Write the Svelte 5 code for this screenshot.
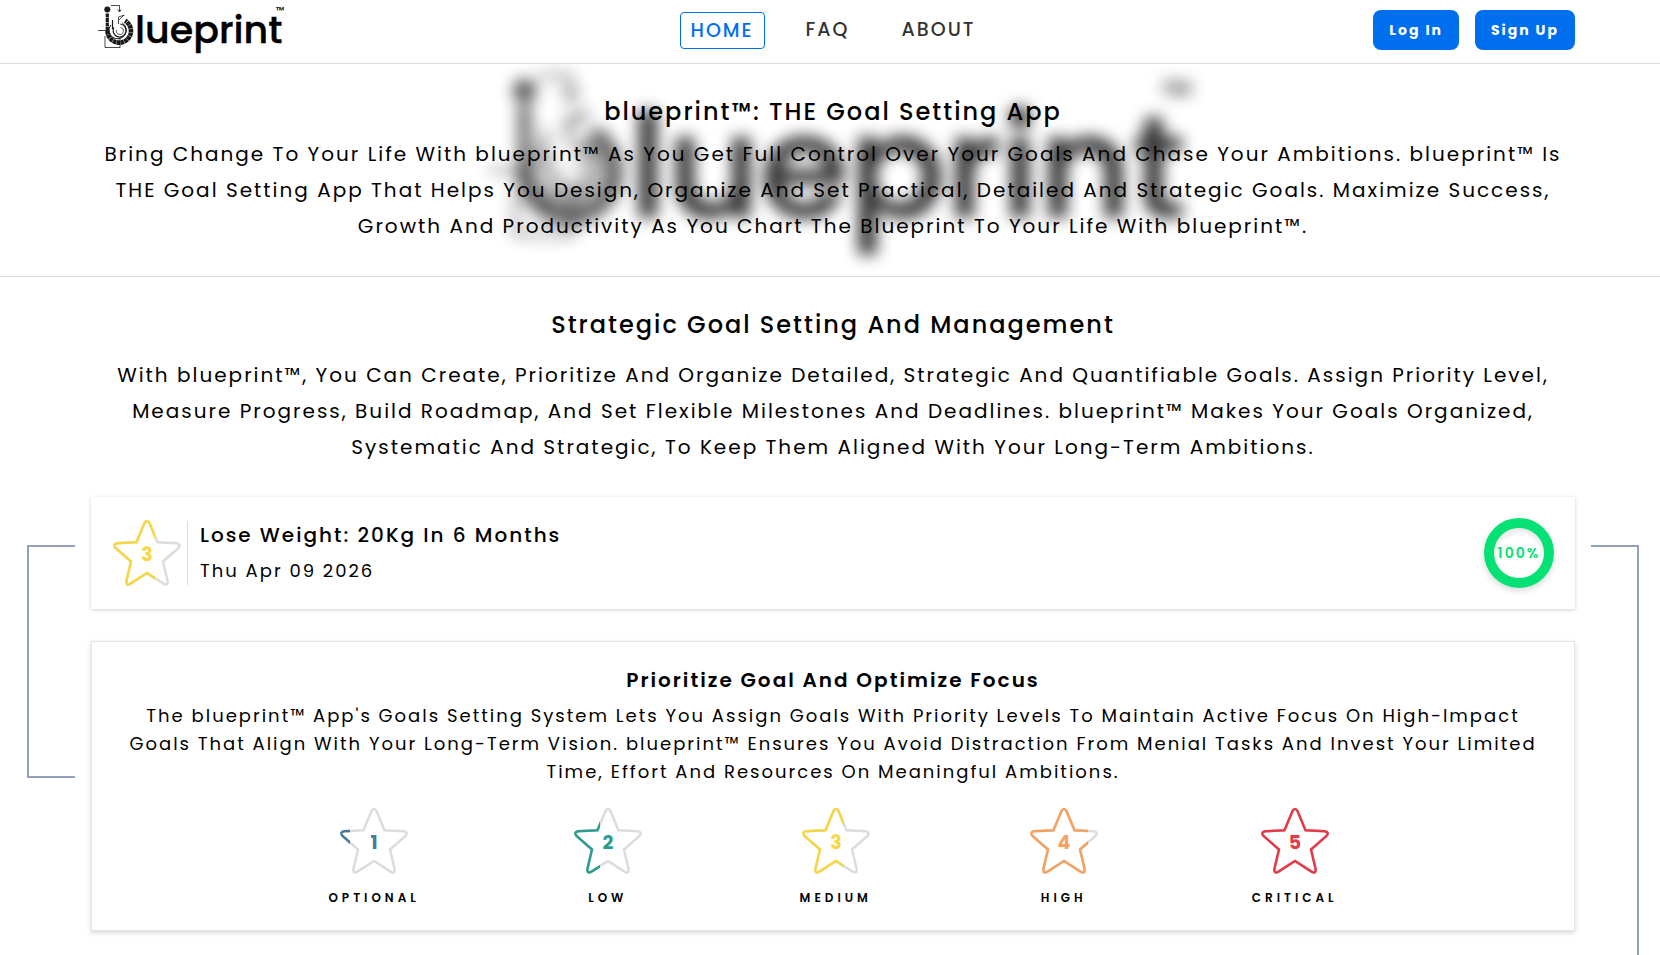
<script>
  const heroLines = [
    'Bring Change To Your Life With blueprint™ As You Get Full Control Over Your Goals And Chase Your Ambitions. blueprint™ Is',
    'THE Goal Setting App That Helps You Design, Organize And Set Practical, Detailed And Strategic Goals. Maximize Success,',
    'Growth And Productivity As You Chart The Blueprint To Your Life With blueprint™.'
  ];
  const strategyLines = [
    'With blueprint™, You Can Create, Prioritize And Organize Detailed, Strategic And Quantifiable Goals. Assign Priority Level,',
    'Measure Progress, Build Roadmap, And Set Flexible Milestones And Deadlines. blueprint™ Makes Your Goals Organized,',
    'Systematic And Strategic, To Keep Them Aligned With Your Long-Term Ambitions.'
  ];
  const priorityLines = [
    "The blueprint™ App's Goals Setting System Lets You Assign Goals With Priority Levels To Maintain Active Focus On High-Impact",
    'Goals That Align With Your Long-Term Vision. blueprint™ Ensures You Avoid Distraction From Menial Tasks And Invest Your Limited',
    'Time, Effort And Resources On Meaningful Ambitions.'
  ];
  const levels = [
    { n: 1, label: 'OPTIONAL', color: '#457b9d' },
    { n: 2, label: 'LOW', color: '#2a9d8f' },
    { n: 3, label: 'MEDIUM', color: '#f6d743' },
    { n: 4, label: 'HIGH', color: '#f4a261' },
    { n: 5, label: 'CRITICAL', color: '#e63946' }
  ];
  const starPath =
    'M33.5 7Q36 3 38.5 7L46.5 26.2L66 27.3Q70.5 28.3 67.5 32L52 45.5L56.7 65.5Q56.8 70 52.5 67.6L36 57L19.5 67.6Q15.2 70 15.3 65.5L20 45.5L4.5 32Q1.5 28.3 6 27.3L25.5 26.2Z';
</script>

{#snippet logo()}
  <svg class="logo-art" viewBox="92 0 196 61" aria-hidden="true">
    <g fill="none" stroke="#1a1a1a">
      <path d="M108.3 13.500V33" stroke-width="3.200" stroke-dasharray="4 .5" />
      <path d="M108.600 31a11.700 11.700 0 1 0 17.500 -10.200" stroke-width="4.600" stroke-dasharray="3.500 .4" />
      <path d="M111.800 25a8.600 8.600 0 1 0 11.500-2" stroke-width="1" />
      <path d="M113.500 20v9M114.800 27.500a6.500 6.500 0 1 0 6.500-3.500" stroke-width="1.200" />
      <path d="M117.500 30a3.500 3.500 0 1 0 4-2.500" stroke-width=".7" />
      <path d="M119.500 24v-7l6-2M120 20l5-5M112 5.500h8.500v6M118.700 9.500l1.800 2.500l1.800-2.500M99 30.500h9M106 36v11.500h15M121 37v11" stroke-width=".8" />
    </g>
    <circle cx="108.300" cy="9.500" r="3" fill="#1a1a1a" />
    <text class="word" x="136" y="43">lueprint</text>
    <text class="tm" x="277" y="14">™</text>
  </svg>
{/snippet}

{#snippet star(n, color)}
  <svg class="star" viewBox="0 1 72 72" role="img" aria-label="Priority {n}">
    <defs>
      <clipPath id="fill-{n}"><rect width={n === 5 ? 72 : n * 16 - 4} height="73" /></clipPath>
    </defs>
    <path d={starPath} fill="none" stroke="#dcdcdc" stroke-width="2.500" />
    <path d={starPath} fill="none" stroke={color} stroke-width="2.500" clip-path="url(#fill-{n})" />
    <text x="36" y="45" fill={color}>{n}</text>
  </svg>
{/snippet}

<header>
  <a class="brand" href="#home" aria-label="blueprint">{@render logo()}</a>
  <nav>
    <a class="active" href="#home">HOME</a>
    <a href="#faq">FAQ</a>
    <a href="#about">ABOUT</a>
  </nav>
  <div class="account">
    <button type="button">Log In</button>
    <button type="button">Sign Up</button>
  </div>
</header>

<section class="hero">
  <div class="backdrop">{@render logo()}</div>
  <h1>blueprint™: THE Goal Setting App</h1>
  <p>{#each heroLines as line}<span>{line}</span>{/each}</p>
</section>

<main>
  <h2>Strategic Goal Setting And Management</h2>
  <p class="lead">{#each strategyLines as line}<span>{line}</span>{/each}</p>

  <div class="flow">
    <article class="goal">
      {@render star(3, '#f6d743')}
      <div class="details">
        <h3>Lose Weight: 20Kg In 6 Months</h3>
        <time datetime="2026-04-09">Thu Apr 09 2026</time>
      </div>
      <div class="ring">100%</div>
    </article>

    <article class="priority">
      <h3>Prioritize Goal And Optimize Focus</h3>
      <p>{#each priorityLines as line}<span>{line}</span>{/each}</p>
      <ul>
        {#each levels as level}
          <li>
            {@render star(level.n, level.color)}
            <b>{level.label}</b>
          </li>
        {/each}
      </ul>
    </article>
    <i class="link left"></i>
    <i class="link right"></i>
  </div>
</main>

<style>
  :global(body) {
    background: #fff;
    color: #000;
    font-family: Poppins, Inter, sans-serif;
    letter-spacing: 2px;
  }
  h1, h2, h3, p, ul { margin: 0; padding: 0; }
  p span { display: block; white-space: nowrap; }
  header, .hero, main { padding: 0 85px 0 91px; }
  header {
    display: grid;
    grid-template-columns: 1fr auto 1fr;
    align-items: start;
    height: 63px;
    border-bottom: 1px solid #dcdcdc;
  }
  .brand { width: 196px; height: 61px; }
  .logo-art { display: block; width: 100%; letter-spacing: 0; }
  .word { font: 500 38px Poppins, Inter, sans-serif; stroke: #000; stroke-width: .4px; }
  .tm { font: 500 10px Poppins, Inter, sans-serif; }
  nav { display: flex; align-items: flex-start; gap: 30px; padding-top: 12px; }
  nav a {
    padding: 0 11px;
    border-radius: 4px;
    color: #333;
    font-size: 19px;
    font-weight: 500;
    line-height: 35px;
    text-decoration: none;
  }
  nav .active { padding: 0 10px; border: 1px solid #006fee; color: #006fee; }
  .account { display: flex; justify-content: flex-end; gap: 16px; padding-top: 10px; }
  button {
    height: 40px;
    padding: 0 16px;
    border: 0;
    border-radius: 8px;
    background: #006fee;
    color: #fff;
    font: 700 14px Poppins, Inter, sans-serif;
    letter-spacing: 2px;
  }
  .hero {
    position: relative;
    overflow: hidden;
    padding-top: 30px;
    padding-bottom: 32px;
    border-bottom: 1px solid #dcdcdc;
    text-align: center;
  }
  .backdrop {
    position: absolute;
    inset: 0;
    display: grid;
    place-items: center;
    padding-left: 6px;
    opacity: .8;
    filter: blur(8px);
  }
  .backdrop .logo-art { width: 740px; }
  h1, .hero p { position: relative; }
  h1, h2 { font-size: 24px; font-weight: 500; line-height: 36px; }
  .hero p { padding-top: 6px; }
  .hero p, .lead { font-size: 20px; line-height: 36px; }
  main { text-align: center; }
  h2 { padding-top: 30px; }
  .lead { padding-top: 14px; }
  .flow { position: relative; padding: 32px 0 24px; }
  .goal {
    display: flex;
    align-items: center;
    padding: 20px 21px 20px 20px;
    box-shadow: 0 1px 4px rgba(0, 0, 0, .18);
    text-align: left;
  }
  .star { display: block; width: 72px; height: 72px; letter-spacing: 0; }
  .star text { font-size: 19px; font-weight: 700; text-anchor: middle; }
  .details {
    flex: 1;
    margin-left: 4px;
    padding-left: 12px;
    border-left: 1px solid #dcdcdc;
  }
  h3 { font-size: 20px; font-weight: 500; line-height: 32px; }
  .details h3 { margin-bottom: 8px; line-height: 28px; }
  time { display: block; font-size: 18px; line-height: 28px; }
  .ring {
    box-sizing: border-box;
    display: grid;
    place-items: center;
    width: 70px;
    height: 70px;
    border: 10px solid #06e175;
    border-radius: 50%;
    box-shadow: 0 3px 6px rgba(0, 0, 0, .15), inset 0 3px 6px rgba(0, 0, 0, .12);
    color: #06e175;
    font-size: 14px;
    font-weight: 600;
  }
  .priority {
    margin-top: 32px;
    padding: 22px 32px;
    border: 1px solid #dfe6ee;
    box-shadow: 0 2px 5px rgba(0, 0, 0, .16);
  }
  .priority h3 { font-weight: 600; }
  .priority p { padding-top: 6px; font-size: 18px; line-height: 28px; }
  ul { display: flex; justify-content: center; gap: 148px; padding-top: 19px; list-style: none; }
  li { display: flex; flex-direction: column; align-items: center; gap: 11px; min-width: 80px; }
  b { font-size: 12px; font-weight: 600; line-height: 20px; letter-spacing: 4px; }
  .link { position: absolute; top: 80px; width: 46px; border: 2px solid #8fa1bd; }
  .left { left: -64px; height: 229px; border-right: 0; }
  .right { right: -64px; bottom: 0; border-left: 0; border-bottom: 0; }
</style>
